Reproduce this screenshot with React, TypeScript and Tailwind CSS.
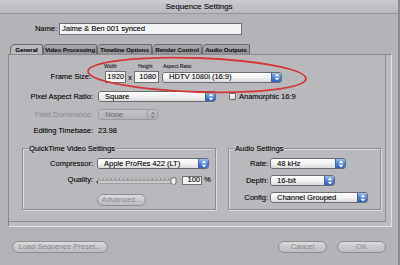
import React from 'react'

// Final Cut style "Sequence Settings" sheet

const Arrows = ({ disabled }: { disabled?: boolean }) => (
    <svg width="6" height="8" viewBox="0 0 6 8">
        <path d="M3 0.5 L5.5 3.2 L0.5 3.2 Z" fill={disabled ? '#8c8c90' : '#ffffff'} />
        <path d="M3 7.5 L5.5 4.8 L0.5 4.8 Z" fill={disabled ? '#8c8c90' : '#ffffff'} />
    </svg>
)

const Popup = ({ text, className, disabled }: { text: string, className: string, disabled?: boolean }) => (
    <div className={`flex h-[11px] items-stretch overflow-hidden rounded-[3px] border ${disabled ? 'border-[#9c9ca0]' : 'border-[#6c6c70]'} ${className}`}>
        <div className={`flex flex-1 items-center pl-[6px] text-[7.5px] leading-none ${disabled ? 'bg-gradient-to-b from-[#c4c4c8] to-[#b2b2b6] text-[#8a8a8e]' : 'bg-gradient-to-b from-[#ffffff] via-[#f2f2f2] to-[#dcdcdc] text-[#111]'}`}>
            {text}
        </div>
        <div className={`flex w-[10px] items-center justify-center border-l ${disabled ? 'border-[#a0a0a4] bg-gradient-to-b from-[#c4c4c8] to-[#b0b0b4]' : 'border-[#3f63a8] bg-gradient-to-b from-[#9cc0f0] via-[#4d82d6] to-[#2f62bc]'}`}>
            <Arrows disabled={disabled} />
        </div>
    </div>
)

const Pill = ({ text, className }: { text: string, className: string }) => (
    <div className={`flex h-[12px] items-center justify-center rounded-full border border-[#8e8e92] bg-gradient-to-b from-[#dcdcdf] via-[#c8c8cb] to-[#bdbdc0] text-[7.5px] leading-none text-[#8a8a8e] [text-shadow:none] ${className}`}>
        {text}
    </div>
)

const Tab = ({ label, active, className }: { label: string, active?: boolean, className: string }) => (
    <div className={`flex h-[10px] items-center justify-center rounded-tl-[5px] rounded-tr-[2px] border border-b-0 border-[#6a6a6e] text-[6px] font-bold leading-none ${active ? 'bg-[#b9b9bd] text-[#111]' : 'bg-gradient-to-b from-[#a8a8ac] to-[#929296] text-[#222]'} ${className}`}>
        {label}
    </div>
)

const Label = ({ children, className }: { children: React.ReactNode, className: string }) => (
    <div className={`text-right text-[7.5px] leading-none ${className}`}>{children}</div>
)

const App = () => {
    return (
        <div className="relative flex h-[265px] w-[400px] flex-col overflow-hidden border-r-2 border-[#8c8c90] bg-[#b4b4b8] font-['Liberation_Sans',Arial,sans-serif] text-[#111] [text-shadow:0.3px_0_0_rgba(0,0,0,0.45)]">
            <div className="flex h-[14px] items-center justify-center border-b border-[#96969a] bg-gradient-to-b from-[#cbcbcf] to-[#b9b9bd] text-[8px] leading-none text-[#1a1a1a]">
                Sequence Settings
            </div>

            {/* name */}
            <div className="mt-[9px] flex h-[12px] items-center">
                <Label className="w-[57px]">Name:</Label>
                <div className="ml-[2px] flex h-[12px] w-[183px] items-center border border-[#707074] bg-[#f4f4f4] pl-[2px] text-[7.5px] leading-none">
                    Jaime &amp; Ben 001 synced
                </div>
            </div>

            {/* tabs */}
            <div className="ml-[10px] mt-[9px] flex">
                <Tab label="General" active className="w-[33px]" />
                <Tab label="Video Processing" className="w-[54px]" />
                <Tab label="Timeline Options" className="w-[55px]" />
                <Tab label="Render Control" className="w-[50px]" />
                <Tab label="Audio Outputs" className="w-[48px]" />
            </div>

            {/* panel */}
            <div className="ml-[8px] flex h-[173px] w-[384px] border border-[#8a8a8e] border-b-[#e2e2e6] border-r-[#e2e2e6] bg-[#bcbcc0] pb-[4px] pr-[5px]">
                <div className="flex flex-1 flex-col border-b border-r border-[#8e8e92] bg-[#b9b9bd]">
                    {/* frame size */}
                    <div className="mt-[8px] flex h-[6px] items-end text-[5px] leading-none text-[#222]">
                        <div className="ml-[95px] w-[34px]">Width</div>
                        <div className="w-[25px]">Height</div>
                        <div>Aspect Ratio</div>
                    </div>
                    <div className="mt-[2px] flex h-[12px] items-center">
                        <Label className="w-[82px]">Frame Size:</Label>
                        <div className="ml-[14px] flex h-[12px] w-[21px] items-center justify-end border border-[#707074] bg-[#f4f4f4] pr-[1px] text-[7.5px] leading-none">1920</div>
                        <div className="w-[8px] text-center text-[7px] leading-none">x</div>
                        <div className="flex h-[12px] w-[25px] items-center justify-end border border-[#707074] bg-[#f4f4f4] pr-[2px] text-[7.5px] leading-none">1080</div>
                        <Popup text="HDTV 1080i (16:9)" className="ml-[3px] w-[120px]" />
                    </div>

                    <div className="mt-[8px] flex h-[11px] items-center">
                        <Label className="w-[84px]">Pixel Aspect Ratio:</Label>
                        <Popup text="Square" className="ml-[5px] w-[118px]" />
                        <div className="ml-[13px] h-[7px] w-[7px] rounded-[1px] border border-[#6c6c70] bg-gradient-to-b from-[#ffffff] to-[#d8d8d8]" />
                        <div className="ml-[3px] text-[7.5px] leading-none">Anamorphic 16:9</div>
                    </div>

                    <div className="mt-[7px] flex h-[11px] items-center">
                        <Label className="w-[84px] text-[#8a8a8e] [text-shadow:none]">Field Dominance:</Label>
                        <Popup text="None" disabled className="ml-[5px] w-[60px]" />
                    </div>

                    <div className="mt-[6px] flex h-[10px] items-center">
                        <Label className="w-[84px]">Editing Timebase:</Label>
                        <div className="ml-[5px] text-[7.5px] leading-none">23.98</div>
                    </div>

                    {/* groups */}
                    <div className="mt-[12px] flex">
                        <div className="relative ml-[13px] h-[62px] w-[194px] border border-[#8e8e92] shadow-[1px_1px_0_#dadade,inset_1px_1px_0_#dadade]">
                            <div className="absolute left-[5px] top-[-4px] bg-[#b9b9bd] px-[1px] text-[7.5px] leading-none">QuickTime Video Settings</div>
                            <div className="mt-[9px] flex h-[11px] items-center">
                                <Label className="w-[70px]">Compressor:</Label>
                                <Popup text="Apple ProRes 422 (LT)" className="ml-[4px] w-[112px]" />
                            </div>
                            <div className="mt-[6px] flex h-[10px] items-center">
                                <Label className="w-[70px]">Quality:</Label>
                                <svg className="ml-[3px]" width="84" height="9" viewBox="0 0 84 9">
                                    <rect x="1" y="5" width="79" height="2" rx="1" fill="#f0f0f0" stroke="#6c6c70" strokeWidth="0.6" />
                                    {Array.from({ length: 19 }).map((_, i) => (
                                        <line key={i} x1={3 + i * 4.1} y1="2" x2={3 + i * 4.1} y2="4" stroke="#707074" strokeWidth="0.6" />
                                    ))}
                                    <path d="M0 6 L2 4.5 L2 7.5 Z" fill="#444" />
                                    <path d="M75 2 L80 2 L80 7 L77.5 9 L75 7 Z" fill="#eeeeee" stroke="#555" strokeWidth="0.7" />
                                </svg>
                                <div className="ml-[2px] flex h-[9px] w-[20px] items-center justify-end border border-[#707074] bg-[#f4f4f4] pr-[1px] text-[7.5px] leading-none">100</div>
                                <div className="ml-[2px] text-[7.5px] leading-none">%</div>
                            </div>
                            <Pill text="Advanced..." className="ml-[74px] mt-[9px] h-[10px] w-[49px]" />
                        </div>

                        <div className="relative ml-[12px] h-[62px] w-[153px] border border-[#8e8e92] shadow-[1px_1px_0_#dadade,inset_1px_1px_0_#dadade]">
                            <div className="absolute left-[5px] top-[-4px] bg-[#b9b9bd] px-[1px] text-[7.5px] leading-none">Audio Settings</div>
                            <div className="mt-[9px] flex h-[11px] items-center">
                                <Label className="w-[39px]">Rate:</Label>
                                <Popup text="48 kHz" className="ml-[2px] w-[76px]" />
                            </div>
                            <div className="mt-[6px] flex h-[11px] items-center">
                                <Label className="w-[39px]">Depth:</Label>
                                <Popup text="16-bit" className="ml-[2px] w-[65px]" />
                            </div>
                            <div className="mt-[6px] flex h-[11px] items-center">
                                <Label className="w-[39px]">Config:</Label>
                                <Popup text="Channel Grouped" className="ml-[2px] w-[98px]" />
                            </div>
                        </div>
                    </div>
                </div>
            </div>

            {/* bottom buttons */}
            <div className="mt-[14px] flex items-center px-[12px]">
                <Pill text="Load Sequence Preset..." className="w-[96px]" />
                <div className="flex-1" />
                <Pill text="Cancel" className="w-[49px]" />
                <Pill text="OK" className="ml-[10px] w-[49px]" />
            </div>

            {/* red hand-drawn ellipse over the frame size row */}
            <svg className="pointer-events-none absolute left-0 top-0" width="400" height="265" viewBox="0 0 400 265">
                <ellipse cx="197" cy="75" rx="109" ry="17" transform="rotate(2 197 75)" fill="none" stroke="#d23a3a" strokeWidth="1.8" />
            </svg>
        </div>
    )
}

export default App
